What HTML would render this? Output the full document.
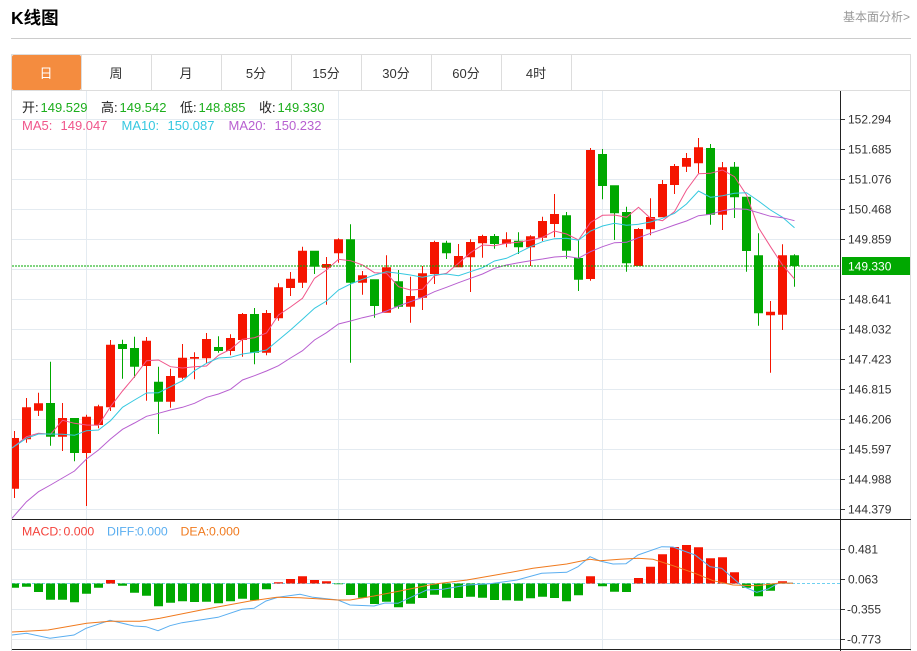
<!DOCTYPE html>
<html lang="zh"><head><meta charset="utf-8"><title>K线图</title>
<style>html,body{margin:0;padding:0;background:#fff;width:917px;height:651px;overflow:hidden}svg{display:block}text{font-family:"Liberation Sans","Noto Sans CJK SC",sans-serif}</style></head>
<body>
<svg width="917" height="651" viewBox="0 0 917 651" xmlns="http://www.w3.org/2000/svg">
<defs>
<clipPath id="m"><rect x="12" y="91" width="828" height="428"/></clipPath>
<clipPath id="d"><rect x="12" y="520" width="828" height="129"/></clipPath>
</defs>
<text x="11" y="24" font-size="17.5" font-weight="700" fill="#000">K线图</text>
<text x="843" y="21" font-size="12" fill="#999">基本面分析&gt;</text>
<rect x="11" y="38" width="900" height="1" fill="#ccc"/>

<!-- frame -->
<g fill="#ddd">
<rect x="11" y="54" width="900" height="1"/>
<rect x="11" y="90" width="900" height="1"/>
<rect x="11" y="54" width="1" height="597"/>
<rect x="910" y="54" width="1" height="597"/>
<rect x="81" y="55" width="1" height="35"/><rect x="151" y="55" width="1" height="35"/><rect x="221" y="55" width="1" height="35"/><rect x="291" y="55" width="1" height="35"/><rect x="361" y="55" width="1" height="35"/><rect x="431" y="55" width="1" height="35"/><rect x="501" y="55" width="1" height="35"/><rect x="571" y="55" width="1" height="35"/>
</g>
<rect x="12" y="55" width="69" height="35" rx="2" fill="#f48c3f"/>
<g font-size="13" fill="#333" text-anchor="middle">
<text x="46" y="78" fill="#fff">日</text><text x="116" y="78">周</text><text x="186" y="78">月</text><text x="256" y="78">5分</text><text x="326" y="78">15分</text><text x="396" y="78">30分</text><text x="466" y="78">60分</text><text x="536" y="78">4时</text>
</g>

<!-- grid -->
<path d="M12 119.5H840M12 149.5H840M12 179.5H840M12 209.5H840M12 239.5H840M12 269.5H840M12 299.5H840M12 329.5H840M12 359.5H840M12 389.5H840M12 419.5H840M12 449.5H840M12 479.5H840M12 509.5H840M12 549.5H840M12 579.5H840M12 609.5H840M12 639.5H840M86.5 91V649M338.5 91V649M602.5 91V649" stroke="#e4ebf1" stroke-width="1" fill="none"/>

<g clip-path="url(#m)">
<!-- red candles -->
<path fill="#f51500" d="M14 431h1V498h-1zM10 438h9V488.7h-9zM26 398h1V442.7h-1zM22 407.3h9V439.3h-9zM38 392.7h1V416h-1zM34 403.3h9V410.7h-9zM62 403h1V451h-1zM58 418h9V436.7h-9zM86 414.7h1V506h-1zM82 416.7h9V453h-9zM98 404.7h1V428.3h-1zM94 406.3h9V425h-9zM110 340h1V411h-1zM106 344.7h9V407.3h-9zM146 337h1V400.7h-1zM142 340.7h9V366h-9zM170 368.7h1V407.7h-1zM166 376h9V401.7h-9zM182 344h1V379.3h-1zM178 357.7h9V377.7h-9zM194 352.3h1V379.3h-1zM190 357h9V358.7h-9zM206 333h1V363.3h-1zM202 339h9V358.3h-9zM230 334.3h1V355.3h-1zM226 338h9V351h-9zM242 313h1V356.7h-1zM238 314h9V340h-9zM266 310h1V355.3h-1zM262 313h9V352.7h-9zM278 283.3h1V320.7h-1zM274 287.3h9V318.3h-9zM290 272h1V296h-1zM286 278.7h9V288h-9zM302 246.7h1V288h-1zM298 250.7h9V282.7h-9zM326 257h1V304.7h-1zM322 264h9V267.7h-9zM338 238.3h1V262.7h-1zM334 239.3h9V253.3h-9zM362 271h1V294.7h-1zM358 275.3h9V282.7h-9zM386 255.3h1V312.7h-1zM382 267.3h9V312.7h-9zM410 276.7h1V322.7h-1zM406 296h9V306.7h-9zM422 266h1V310h-1zM418 273.3h9V297.7h-9zM434 240.7h1V284h-1zM430 242h9V274h-9zM458 244h1V267.3h-1zM454 256h9V267.3h-9zM470 239.3h1V292h-1zM466 242h9V257.3h-9zM482 234.7h1V257.7h-1zM478 236h9V243.3h-9zM506 232.3h1V247.3h-1zM502 239.3h9V243.7h-9zM530 235.3h1V266h-1zM526 236.3h9V247.3h-9zM542 216.7h1V241h-1zM538 221h9V237.7h-9zM554 194h1V237.3h-1zM550 214h9V224h-9zM590 148h1V280.7h-1zM586 150h9V279h-9zM638 228h1V266h-1zM634 229h9V266h-9zM650 198.3h1V235.3h-1zM646 217h9V229.3h-9zM662 180h1V217.3h-1zM658 184h9V217.3h-9zM674 164h1V194h-1zM670 166h9V185h-9zM686 153h1V172h-1zM682 158h9V166.7h-9zM698 138h1V173.3h-1zM694 147.3h9V163.3h-9zM722 162h1V230h-1zM718 167.3h9V214.7h-9zM770 301h1V372.7h-1zM766 311.7h9V315.3h-9zM782 244.3h1V330h-1zM778 255.3h9V314.7h-9z"/>
<!-- green candles -->
<path fill="#00a800" d="M50 361.7h1V445.7h-1zM46 403h9V436.7h-9zM74 418h1V461.3h-1zM70 418h9V453h-9zM122 339.7h1V378.7h-1zM118 344h9V349h-9zM134 336.7h1V377.7h-1zM130 348h9V366.7h-9zM158 366.7h1V434h-1zM154 381.7h9V401.7h-9zM218 336.3h1V352.7h-1zM214 347h9V351h-9zM254 308h1V364.3h-1zM250 314h9V352.7h-9zM314 250.7h1V274h-1zM310 250.7h9V266.7h-9zM350 224.3h1V362.7h-1zM346 239.3h9V282.7h-9zM374 279.3h1V317.7h-1zM370 279.3h9V306h-9zM398 270h1V308.7h-1zM394 281.3h9V306.7h-9zM446 240.7h1V259h-1zM442 242.7h9V253.3h-9zM494 234h1V248.7h-1zM490 236h9V244h-9zM518 232.3h1V254h-1zM514 240.7h9V247.3h-9zM566 212h1V258.7h-1zM562 215.3h9V250.7h-9zM578 240h1V291h-1zM574 258h9V279.7h-9zM602 149h1V199.3h-1zM598 154h9V186h-9zM614 185.3h1V240h-1zM610 185.3h9V213.3h-9zM626 206.7h1V271.7h-1zM622 212h9V263.3h-9zM710 144h1V224.7h-1zM706 148h9V214.7h-9zM734 162h1V218h-1zM730 166.7h9V197.3h-9zM746 196.7h1V271.7h-1zM742 196.7h9V251h-9zM758 233.3h1V325.7h-1zM754 255.3h9V313.3h-9zM794 254.3h1V286.7h-1zM790 255.3h9V266h-9z"/>
<!-- MA lines -->
<polyline fill="none" stroke="#f0558a" stroke-width="1" points="12,448 26.5,436.7 38.5,433.3 50.5,434.3 62.5,420.3 74.5,423.3 86.5,425 98.5,425.3 110.5,406.7 122.5,391 134.5,376.7 146.5,360.7 158.5,360 170.5,366.7 182.5,368 194.5,366.7 206.5,366 218.5,355.3 230.5,349.3 242.5,339.3 254.5,337.7 266.5,333 278.5,315 290.5,307 302.5,298.3 314.5,278.3 326.5,270 338.5,259.3 350.5,260.7 362.5,265 374.5,272.7 386.5,273.3 398.5,286.7 410.5,290 422.5,289.3 434.5,275.7 446.5,273.3 458.5,263.3 470.5,252.7 482.5,245 494.5,245.7 506.5,243.3 518.5,242.3 530.5,240 542.5,237.3 554.5,231 566.5,234 578.5,240 590.5,222.5 602.5,215.3 614.5,215 626.5,217.3 638.5,207.3 650.5,218.3 662.5,220.7 674.5,211.7 686.5,190 698.5,173.7 710.5,173.3 722.5,170 734.5,176.7 746.5,195 758.5,227.7 770.5,246.7 782.5,265 794.5,279"/>
<polyline fill="none" stroke="#35c8e0" stroke-width="1" points="12,448 26.5,438.3 38.5,434 50.5,434 62.5,434.3 74.5,435.3 86.5,430.7 98.5,430 110.5,420.7 122.5,407.3 134.5,400 146.5,393 158.5,392.7 170.5,386.7 182.5,380.7 194.5,370.7 206.5,363.3 218.5,358 230.5,357.3 242.5,354 254.5,352.3 266.5,350 278.5,340 290.5,330 302.5,319.3 314.5,308.3 326.5,301 338.5,290 350.5,284 362.5,279.3 374.5,275 386.5,271.7 398.5,273.3 410.5,275 422.5,277.3 434.5,274.7 446.5,274 458.5,275.7 470.5,271.7 482.5,267.7 494.5,261 506.5,258.3 518.5,252.7 530.5,246.7 542.5,241.7 554.5,238.7 566.5,238.3 578.5,240.2 590.5,231 602.5,226 614.5,223.3 626.5,225.3 638.5,224.3 650.5,222 662.5,218.3 674.5,213.3 686.5,204 698.5,191 710.5,197.3 722.5,195.7 734.5,193.3 746.5,192.7 758.5,201 770.5,210 782.5,217.3 794.5,227.7"/>
<polyline fill="none" stroke="#b85fd0" stroke-width="1" points="10,520 12,518.3 26.5,501.7 38.5,491.7 50.5,485 62.5,478 74.5,471 86.5,459 98.5,450 110.5,439 122.5,429.3 134.5,423 146.5,416.3 158.5,413.3 170.5,410 182.5,407.3 194.5,403.3 206.5,397.3 218.5,394 230.5,389.3 242.5,380 254.5,375.7 266.5,371 278.5,365.7 290.5,358 302.5,350.7 314.5,340 326.5,332.7 338.5,324 350.5,321 362.5,317.7 374.5,315 386.5,311 398.5,306 410.5,301.7 422.5,297.3 434.5,291.7 446.5,287.3 458.5,282.7 470.5,278.3 482.5,274 494.5,268.3 506.5,265 518.5,262.7 530.5,260.7 542.5,259 554.5,257 566.5,256.3 578.5,258.2 590.5,251.7 602.5,246.7 614.5,242.7 626.5,242.3 638.5,237.7 650.5,233.3 662.5,229.3 674.5,225 686.5,221 698.5,215.7 710.5,214.3 722.5,210.7 734.5,208.7 746.5,209.3 758.5,212.7 770.5,216.3 782.5,217.7 794.5,220.7"/>
</g>
<!-- price line -->
<line x1="12" y1="266" x2="840" y2="266" stroke="#00a800" stroke-width="1" stroke-dasharray="2 1"/>

<!-- MACD -->
<line x1="12" y1="583.5" x2="840" y2="583.5" stroke="#6fd0f0" stroke-width="1" stroke-dasharray="3 2"/>
<g clip-path="url(#d)">
<path fill="#00a800" d="M10 583.5h9V587.7h-9zM22 583.5h9V586.7h-9zM34 583.5h9V592h-9zM46 583.5h9V599.7h-9zM58 583.5h9V599.7h-9zM70 583.5h9V602.3h-9zM82 583.5h9V593.7h-9zM94 583.5h9V587.7h-9zM118 583.5h9V585.7h-9zM130 583.5h9V592.7h-9zM142 583.5h9V595.7h-9zM154 583.5h9V606.3h-9zM166 583.5h9V602.7h-9zM178 583.5h9V601.3h-9zM190 583.5h9V602h-9zM202 583.5h9V601.7h-9zM214 583.5h9V603.3h-9zM226 583.5h9V601.3h-9zM238 583.5h9V598.7h-9zM250 583.5h9V600.3h-9zM262 583.5h9V589.3h-9zM334 583.5h9V584.3h-9zM346 583.5h9V595h-9zM358 583.5h9V597.7h-9zM370 583.5h9V604h-9zM382 583.5h9V601.7h-9zM394 583.5h9V607.3h-9zM406 583.5h9V603.7h-9zM418 583.5h9V598h-9zM430 583.5h9V594.7h-9zM442 583.5h9V597.7h-9zM454 583.5h9V598h-9zM466 583.5h9V596.7h-9zM478 583.5h9V597.7h-9zM490 583.5h9V600h-9zM502 583.5h9V600.3h-9zM514 583.5h9V600.7h-9zM526 583.5h9V598.3h-9zM538 583.5h9V596.7h-9zM550 583.5h9V598h-9zM562 583.5h9V601.3h-9zM574 583.5h9V595.3h-9zM598 583.5h9V586.3h-9zM610 583.5h9V591.7h-9zM622 583.5h9V592h-9zM742 583.5h9V587.7h-9zM754 583.5h9V596.3h-9zM766 583.5h9V590.7h-9z"/>
<path fill="#f51500" d="M106 580h9V583.5h-9zM274 582.3h9V583.5h-9zM286 579h9V583.5h-9zM298 576.2h9V583.5h-9zM310 580h9V583.5h-9zM322 581.3h9V583.5h-9zM586 576.3h9V583.5h-9zM634 578h9V583.5h-9zM646 566.7h9V583.5h-9zM658 554.3h9V583.5h-9zM670 547h9V583.5h-9zM682 545h9V583.5h-9zM694 547.3h9V583.5h-9zM706 558.3h9V583.5h-9zM718 557.3h9V583.5h-9zM730 572.3h9V583.5h-9zM778 581.3h9V583.5h-9z"/>
<polyline fill="none" stroke="#5aaef0" stroke-width="1" points="12,635 26.5,633.3 50,638.3 74,635 86,628.3 110,620.3 134,626 146,626.7 158,630.7 170,625.7 182,622.7 218,617.3 242,609.3 254,608.3 266,601 278,597.3 300,594.3 313,597.3 338,600 350,605 374,606 385,603 398,603.3 410,597.7 426.7,590 443,589.3 467,585 490,583.7 517,580 541.7,573.3 566.7,572.3 578,566.7 590,556.7 600,561 613,564 626,563.7 638,555 661.7,546.7 673,547 695,555 710,566.7 721.7,568.3 741.7,585.7 756.7,592.3 768,589 778,583.3 793,583"/>
<polyline fill="none" stroke="#f07a1e" stroke-width="1" points="12,632 48,630 86.7,623.3 110,621.3 140,621.3 160,618.3 200,610.3 250,601 276.7,597.3 300,597.7 338,600 350,600 374,596 400,591 433,584.3 467,580 500,574.3 533,568.3 566.7,564 590,559.3 600,560.7 620,559.3 638,558.3 653,559.3 673,565.7 695,573.3 713,580.7 733,585 757,585.7 780,583 793,583.3"/>
</g>

<!-- black frame lines -->
<g fill="#222">
<rect x="840" y="91" width="1" height="560"/>
<rect x="12" y="519" width="899" height="1"/>
<rect x="12" y="649" width="899" height="1"/>
</g>
<!-- ticks -->
<path d="M841 119.5h4M841 149.5h4M841 179.5h4M841 209.5h4M841 239.5h4M841 299.5h4M841 329.5h4M841 359.5h4M841 389.5h4M841 419.5h4M841 449.5h4M841 479.5h4M841 509.5h4M841 549.5h4M841 579.5h4M841 609.5h4M841 639.5h4" stroke="#333" stroke-width="1" fill="none"/>
<!-- axis labels -->
<g font-size="12" fill="#333">
<text x="848" y="123.5">152.294</text><text x="848" y="153.5">151.685</text><text x="848" y="183.5">151.076</text><text x="848" y="213.5">150.468</text><text x="848" y="243.5">149.859</text><text x="848" y="303.5">148.641</text><text x="848" y="333.5">148.032</text><text x="848" y="363.5">147.423</text><text x="848" y="393.5">146.815</text><text x="848" y="423.5">146.206</text><text x="848" y="453.5">145.597</text><text x="848" y="483.5">144.988</text><text x="848" y="513.5">144.379</text>
<text x="848" y="553.5">0.481</text><text x="848" y="583.5">0.063</text><text x="847" y="613.5">-0.355</text><text x="847" y="643.5">-0.773</text>
</g>
<rect x="842" y="257" width="68" height="18" fill="#00a800"/>
<text x="848" y="270.5" font-size="12" fill="#fff">149.330</text>

<!-- legends -->
<g font-size="13">
<g fill="#222"><text x="22" y="112">开:</text><text x="101" y="112">高:</text><text x="180" y="112">低:</text><text x="259" y="112">收:</text></g>
<g fill="#1cae1c"><text x="40.5" y="112">149.529</text><text x="119.5" y="112">149.542</text><text x="198.5" y="112">148.885</text><text x="277.5" y="112">149.330</text></g>
<g fill="#f0558a"><text x="22" y="130">MA5:</text><text x="60.5" y="130">149.047</text></g>
<g fill="#35c8e0"><text x="121.5" y="130">MA10:</text><text x="167.5" y="130">150.087</text></g>
<g fill="#b85fd0"><text x="228.5" y="130">MA20:</text><text x="274.5" y="130">150.232</text></g>
</g>
<g font-size="12.3">
<g fill="#f4433c"><text x="22" y="535.5">MACD:</text><text x="63.5" y="535.5">0.000</text></g>
<g fill="#5aaef0"><text x="107" y="535.5">DIFF:</text><text x="137" y="535.5">0.000</text></g>
<g fill="#f07a1e"><text x="180.5" y="535.5">DEA:</text><text x="209" y="535.5">0.000</text></g>
</g>
</svg>
</body></html>
